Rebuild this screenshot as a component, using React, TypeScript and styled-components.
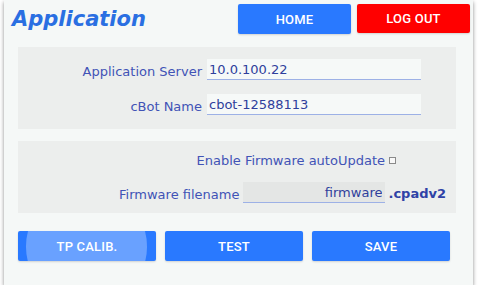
import React from "react";
import styled, { createGlobalStyle } from "styled-components";

const Global = createGlobalStyle`
  html, body { margin: 0; padding: 0; background: #ffffff; }
  body { font-family: "DejaVu Sans", sans-serif; }
`;

const Panel = styled.div`
  margin: 0 0 0 4px;
  width: 469px;
  height: 285px;
  background: #f5f8f7;
  box-shadow: 0 2px 4px rgba(0, 0, 0, 0.45);
  display: flex;
  flex-direction: column;
  box-sizing: border-box;
`;

const Header = styled.div`
  height: 47px;
  box-sizing: border-box;
  padding: 4px 3px 0 8px;
  display: flex;
  align-items: flex-start;
`;

const Title = styled.h1`
  margin: 3px 0 0 0;
  flex: 1;
  font-family: "DejaVu Sans", sans-serif;
  font-weight: bold;
  font-style: italic;
  font-size: 21px;
  line-height: 24px;
  color: #2a6fe2;
`;

const Button = styled.button<{ $tone?: "blue" | "red"; $w: number }>`
  position: relative;
  overflow: hidden;
  width: ${(p) => p.$w}px;
  height: ${(p) => (p.$tone === "red" ? 29 : 30)}px;
  border: none;
  border-radius: 2px;
  background: ${(p) => (p.$tone === "red" ? "#ff0000" : "#2979ff")};
  color: #ffffff;
  font-family: Roboto, sans-serif;
  font-weight: 500;
  font-size: 13px;
  letter-spacing: 0.2px;
  padding: 0;
  display: flex;
  align-items: center;
  justify-content: center;
  box-shadow: 0 1px 2px rgba(0, 0, 0, 0.15);
`;

const HeaderButtons = styled.div`
  display: flex;
  gap: 6px;
`;

const Ripple = styled.span`
  position: absolute;
  left: 8px;
  top: 50%;
  width: 121px;
  height: 121px;
  margin-top: -60.5px;
  border-radius: 50%;
  background: rgba(255, 255, 255, 0.3);
`;

const ButtonLabel = styled.span`
  position: relative;
`;

const Content = styled.div`
  padding: 0 17px 0 14px;
  display: flex;
  flex-direction: column;
`;

const Section = styled.div<{ $pt: number; $pb: number; $gap: number }>`
  background: #eceeed;
  padding: ${(p) => p.$pt}px 0 ${(p) => p.$pb}px 0;
  display: flex;
  flex-direction: column;
  gap: ${(p) => p.$gap}px;
`;

const GridRow = styled.div`
  display: grid;
  grid-template-columns: 1fr 214px;
  column-gap: 5px;
  align-items: end;
  padding-right: 35px;
`;

const FlexRow = styled.div<{ $pr: number }>`
  display: flex;
  justify-content: flex-end;
  align-items: flex-end;
  padding-right: ${(p) => p.$pr}px;
`;

const Label = styled.label`
  font-family: "DejaVu Sans", sans-serif;
  font-size: 13px;
  line-height: 15px;
  color: #4153b6;
  text-align: right;
  white-space: nowrap;
  margin-bottom: 1px;
`;

const Field = styled.input<{ $w?: number; $dark?: boolean; $right?: boolean }>`
  box-sizing: border-box;
  width: ${(p) => (p.$w ? `${p.$w}px` : "100%")};
  height: 21px;
  margin: 0;
  border: none;
  border-bottom: 1px solid #9db1e6;
  background: ${(p) => (p.$dark ? "#e4e6e5" : "#f6f9f8")};
  font-family: "DejaVu Sans", sans-serif;
  font-size: 13px;
  color: #2f3f9c;
  padding: 0 ${(p) => (p.$right ? 3 : 0)}px 0 ${(p) => (p.$right ? 0 : 2)}px;
  text-align: ${(p) => (p.$right ? "right" : "left")};
  outline: none;
`;

const FileField = styled(Field)`
  margin-left: 4px;
`;

const Check = styled.span`
  display: inline-block;
  box-sizing: border-box;
  width: 7px;
  height: 7px;
  border: 1px solid #8a8a8a;
  background: #f8f8f8;
  margin: 0 0 5px 4px;
`;

const Ext = styled.span`
  font-family: "DejaVu Sans", sans-serif;
  font-weight: bold;
  font-size: 13px;
  line-height: 15px;
  color: #2f42a6;
  margin: 0 0 2px 3px;
`;

const Gap = styled.div<{ $h: number }>`
  height: ${(p) => p.$h}px;
`;

const ActionRow = styled.div`
  display: flex;
  gap: 9px;
`;

export default function App() {
  return (
    <>
      <Global />
      <Panel>
        <Header>
          <Title>Application</Title>
          <HeaderButtons>
            <Button $w={113}>HOME</Button>
            <Button $w={113} $tone="red">
              LOG OUT
            </Button>
          </HeaderButtons>
        </Header>
        <Content>
          <Section $pt={12} $pb={14} $gap={14}>
            <GridRow>
              <Label>Application Server</Label>
              <Field readOnly value="10.0.100.22" />
            </GridRow>
            <GridRow>
              <Label>cBot Name</Label>
              <Field readOnly value="cbot-12588113" />
            </GridRow>
          </Section>
          <Gap $h={12} />
          <Section $pt={12} $pb={10} $gap={13}>
            <FlexRow $pr={60}>
              <Label>Enable Firmware autoUpdate</Label>
              <Check />
            </FlexRow>
            <FlexRow $pr={10}>
              <Label>Firmware filename</Label>
              <FileField readOnly value="firmware" $w={142} $dark $right />
              <Ext>.cpadv2</Ext>
            </FlexRow>
          </Section>
          <Gap $h={18} />
          <ActionRow>
            <Button $w={138}>
              <Ripple />
              <ButtonLabel>TP CALIB.</ButtonLabel>
            </Button>
            <Button $w={138}>TEST</Button>
            <Button $w={138}>SAVE</Button>
          </ActionRow>
        </Content>
      </Panel>
    </>
  );
}
